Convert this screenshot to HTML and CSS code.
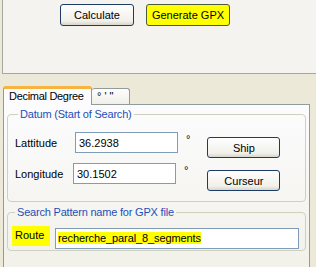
FILE: index.html
```html
<!DOCTYPE html>
<html lang="fr">
<head>
    <meta charset="UTF-8">
    <title>Search Pattern</title>
    <link rel="stylesheet" href="styles.css">
</head>
<body>
    <!-- haut : boutons d'action -->
    <div class="top">
        <button class="btn btn-calc">Calculate</button>
        <button class="btn btn-gpx">Generate GPX</button>
    </div>

    <!-- onglets -->
    <div class="tabs">
        <div class="tab tab-on">Decimal Degree</div>
        <div class="tab tab-off">° ' "</div>
    </div>

    <div class="panel">
        <fieldset class="grp grp-datum">
            <legend>Datum (Start of Search)</legend>
            <div class="datum">
                <div class="coords">
                    <div class="row">
                        <span class="lbl">Lattitude</span>
                        <input class="txt" type="text" value="36.2938">
                        <span class="deg">°</span>
                    </div>
                    <div class="row row2">
                        <span class="lbl">Longitude</span>
                        <input class="txt" type="text" value="30.1502">
                        <span class="deg">°</span>
                    </div>
                </div>
                <div class="side">
                    <button class="btn btn-side">Ship</button>
                    <button class="btn btn-side">Curseur</button>
                </div>
            </div>
        </fieldset>

        <fieldset class="grp grp-name">
            <legend>Search Pattern name for GPX file</legend>
            <div class="route">
                <span class="route-lbl">Route</span>
                <div class="route-box"><span class="sel">recherche_paral_8_segments</span></div>
            </div>
        </fieldset>
    </div>
</body>
</html>
```

FILE: styles.css
```css
/* base */
html, body{
    margin: 0;
    padding: 0;
}
body{
    background: #ece9d8;
    font-family: "Liberation Sans", Arial, sans-serif;
    font-size: 11px;
    color: #000;
    height: 267px;
    overflow: hidden;
}

/* zone du haut */
.top{
    display: flex;
    gap: 12px;
    height: 69px;
    margin-left: 2px;
    padding: 4px 0 0 57px;
    background: #f4f3ef;
    border-left: 1px solid #a7a6a0;
    border-bottom: 1px solid #a7a6a0;
}

/* boutons XP */
.btn{
    height: 22px;
    padding: 0;
    font: inherit;
    font-weight: normal;
    color: #000;
    border: 1px solid #1c3c66;
    border-radius: 3px;
    background: linear-gradient(#fefefe, #f1f0ea 80%, #d8d5c9);
}
.btn-calc{
    width: 74px;
}
.btn-gpx{
    width: 84px;
    background: #ffff00;
    border-color: #4a5a3a;
}

/* onglets */
.tabs{
    display: flex;
    align-items: flex-end;
    margin: 12px 0 0 3px;
    height: 18px;
}
.tab{
    box-sizing: border-box;
    white-space: nowrap;
    border: 1px solid #919b9c;
    border-bottom: none;
    border-radius: 3px 3px 0 0;
}
.tab-on{
    width: 89px;
    height: 19px;
    padding: 0 0 0 5px;
    line-height: 15px;
    letter-spacing: -0.3px;
    background: #fcfcfe;
    border-top: 3px solid #f7b33f;
    position: relative;
    z-index: 1;
    margin-bottom: -1px;
}
.tab-off{
    width: 38px;
    height: 16px;
    line-height: 14px;
    padding-left: 5px;
    border-left: none;
    background: linear-gradient(#fefefe, #f0efe9);
}

/* panneau (continue sous le bord de la fenetre) */
.panel{
    box-sizing: border-box;
    width: 307px;
    height: 163px;
    margin-left: 3px;
    padding: 3px 3px 0 3px;
    border: 1px solid #919b9c;
    border-bottom: none;
    background: linear-gradient(#fcfcfe, #f2f1ea 95%);
}

/* groupes */
.grp{
    margin: 0;
    border: 1px solid #d0d0bf;
    border-radius: 4px;
}
.grp legend{
    margin-left: 3px;
    padding: 0 2px;
    letter-spacing: -0.2px;
    color: #1f4fb6;
}
.grp-datum{
    height: 80px;
    padding: 12px 7px 0 7px;
}
.grp-name{
    margin-top: 4px;
    height: 35px;
    padding: 8px 6px 0 4px;
}

/* datum */
.datum{
    display: flex;
}
.coords{
    display: flex;
    flex-direction: column;
    gap: 10px;
}
.row{
    display: flex;
    align-items: center;
}
.lbl{
    width: 60px;
}
.row2 .lbl{
    width: 58px;
}
.txt{
    box-sizing: border-box;
    width: 103px;
    height: 21px;
    margin: 0;
    padding: 0 3px;
    font: inherit;
    border: 1px solid #7f9db9;
    background: #fff;
}
.deg{
    align-self: flex-start;
    margin: 1px 0 0 8px;
}
.side{
    display: flex;
    flex-direction: column;
    gap: 12px;
    margin: 5px 0 0 17px;
}
.btn-side{
    width: 73px;
    height: 21px;
}

/* route */
.route{
    display: flex;
    align-items: flex-start;
    gap: 5px;
}
.route-lbl{
    width: 38px;
    height: 20px;
    line-height: 18px;
    padding-left: 3px;
    box-sizing: border-box;
    background: #ffff00;
}
.route-box{
    box-sizing: border-box;
    width: 244px;
    height: 21px;
    margin-top: 2px;
    padding: 2px 2px;
    border: 1px solid #7f9db9;
    background: #fff;
    line-height: 15px;
    letter-spacing: -0.1px;
}
.sel{
    background: #ffff00;
}
```
